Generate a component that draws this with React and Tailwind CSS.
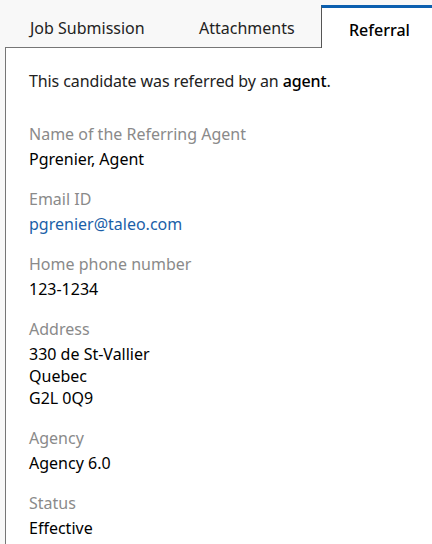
import React from "react";

const fields = [
  { label: "Name of the Referring Agent", lines: ["Pgrenier, Agent"] },
  { label: "Email ID", lines: ["pgrenier@taleo.com"], link: true },
  { label: "Home phone number", lines: ["123-1234"] },
  { label: "Address", lines: ["330 de St-Vallier", "Quebec", "G2L 0Q9"] },
  { label: "Agency", lines: ["Agency 6.0"] },
  { label: "Status", lines: ["Effective"] },
];

// Referral tab of the candidate file
const App = () => {
  return (
    <div
      className="w-[432px] h-[544px] overflow-hidden bg-[#f8f8f8] pl-[5px] text-[16px]"
      style={{ fontFamily: '"Noto Sans", "Open Sans", "Liberation Sans", sans-serif' }}
    >
      <div className="flex h-[48px]">
        <div className="w-[167px] h-[48px] border-b border-[#767676] pl-[25px] pt-[16px] leading-[24px] text-[#222]">
          Job Submission
        </div>
        <div className="w-[149px] h-[48px] border-b border-[#767676] pl-[27px] pt-[16px] leading-[24px] text-[#222]">
          Attachments
        </div>
        <div className="flex-1 mt-[5px] h-[43px] bg-white border-t-[3px] border-t-[#0b5faf] border-l border-l-[#555] pl-[27px] pt-[10px] leading-[24px] font-medium text-black">
          Referral
        </div>
      </div>
      <div className="h-full bg-white border-l border-[#767676] pl-[23px] pt-[21px]">
        <p className="leading-[24px] text-[#222] tracking-[-0.1px]">
          This candidate was referred by an <span className="font-medium text-black">agent</span>.
        </p>
        <div className="mt-[29px] flex flex-col gap-[17px]">
          {fields.map((f) => (
            <div key={f.label}>
              <div className="leading-[24px] text-[#8a8a8a]">{f.label}</div>
              <div className="mt-[2px]">
                {f.lines.map((line) => (
                  <div
                    key={line}
                    className={`leading-[22px] ${f.link ? "text-[#1b5fa8]" : "text-black"}`}
                  >
                    {line}
                  </div>
                ))}
              </div>
            </div>
          ))}
        </div>
      </div>
    </div>
  );
};

export default App;
